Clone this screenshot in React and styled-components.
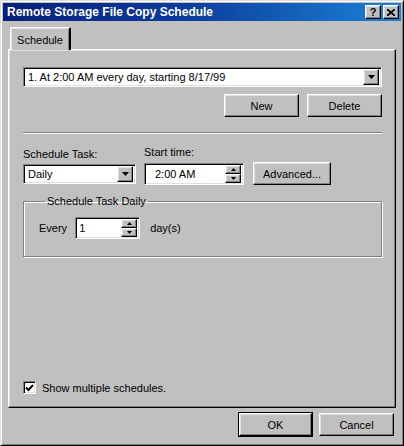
import React from "react";
import styled, { createGlobalStyle, css } from "styled-components";

const GlobalStyle = createGlobalStyle`
  html, body {
    margin: 0;
    padding: 0;
    background: #c0c0c0;
  }
  * {
    box-sizing: border-box;
  }
`;

const raised = css`
  border: 1px solid;
  border-color: #ffffff #000000 #000000 #ffffff;
  box-shadow: inset -1px -1px #808080, inset 1px 1px #dfdfdf;
  background: #c0c0c0;
`;

const sunken = css`
  border: 1px solid;
  border-color: #808080 #ffffff #ffffff #808080;
  box-shadow: inset 1px 1px #000000, inset -1px -1px #dfdfdf;
  background: #ffffff;
`;

const Window = styled.div`
  width: 404px;
  height: 446px;
  display: flex;
  flex-direction: column;
  padding: 2px;
  border: 1px solid;
  border-color: #dfdfdf #000000 #000000 #dfdfdf;
  box-shadow: inset 1px 1px #ffffff, inset -1px -1px #808080;
  background: #c0c0c0;
  font-family: "Liberation Sans", Arial, sans-serif;
  font-size: 11px;
  color: #000;
`;

const TitleBar = styled.div`
  height: 18px;
  flex: none;
  display: flex;
  align-items: center;
  padding: 0 2px 0 4px;
  background: linear-gradient(to right, #08207a 0%, #0c3c9c 45%, #1a82d6 100%);
  color: #fff;
  font-weight: bold;
  font-size: 12px;
`;

const Title = styled.span`
  flex: 1;
  white-space: nowrap;
`;

const CaptionButtons = styled.div`
  display: flex;
  gap: 2px;
`;

const CaptionButton = styled.div`
  ${raised};
  width: 16px;
  height: 14px;
  display: flex;
  align-items: center;
  justify-content: center;
  color: #000;
  font-size: 11px;
  font-weight: bold;
  line-height: 1;
`;

const Body = styled.div`
  flex: 1;
  display: flex;
  flex-direction: column;
  padding: 6px 5px 0 5px;
`;

const TabStrip = styled.div`
  display: flex;
  padding-left: 2px;
  height: 22px;
  position: relative;
  z-index: 1;
`;

const Tab = styled.div`
  width: 61px;
  height: 23px;
  display: flex;
  align-items: center;
  justify-content: center;
  border-left: 1px solid #ffffff;
  border-top: 1px solid #ffffff;
  border-right: 2px solid #000000;
  border-top-left-radius: 2px;
  border-top-right-radius: 2px;
  box-shadow: inset 1px 1px #dfdfdf, inset -1px 0 #808080;
  background: #c0c0c0;
  padding-top: 1px;
`;

const Panel = styled.div`
  height: 359px;
  flex: none;
  display: flex;
  flex-direction: column;
  padding: 17px 13px 13px 14px;
  border: 1px solid;
  border-color: #ffffff #000000 #000000 #ffffff;
  box-shadow: inset -1px -1px #808080, inset 1px 1px #dfdfdf;
`;

const Row = styled.div`
  display: flex;
  align-items: center;
  flex: none;
  gap: ${(p) => p.$gap || 0}px;
  justify-content: ${(p) => p.$justify || "flex-start"};
  margin-top: ${(p) => p.$top || 0}px;
`;

const Field = styled.div`
  ${sunken};
  height: ${(p) => p.$h || 20}px;
  width: ${(p) => (p.$w ? p.$w + "px" : "auto")};
  flex: none;
  display: flex;
  align-items: center;
  padding: 2px;
`;

const FieldText = styled.span`
  flex: 1;
  padding-left: ${(p) => p.$pad || 2}px;
  white-space: nowrap;
`;

const DropButton = styled.div`
  ${raised};
  width: 16px;
  height: 16px;
  display: flex;
  align-items: center;
  justify-content: center;
`;

const Spinner = styled.div`
  display: flex;
  flex-direction: column;
  width: 16px;
  height: 18px;
`;

const SpinHalf = styled.div`
  ${raised};
  flex: 1;
  display: flex;
  align-items: center;
  justify-content: center;
`;

const Button = styled.div`
  ${raised};
  width: ${(p) => p.$w || 75}px;
  height: 23px;
  flex: none;
  display: flex;
  align-items: center;
  justify-content: center;
  ${(p) =>
    p.$default &&
    css`
      box-shadow: inset -1px -1px #808080, inset 1px 1px #dfdfdf, 0 0 0 1px #000;
    `}
`;

const Separator = styled.div`
  height: 2px;
  flex: none;
  margin-top: 15px;
  border-top: 1px solid #808080;
  border-bottom: 1px solid #ffffff;
`;

const Column = styled.div`
  display: flex;
  flex-direction: column;
  gap: 4px;
  width: ${(p) => (p.$w ? p.$w + "px" : "auto")};
`;

const Label = styled.span`
  white-space: nowrap;
  margin-left: ${(p) => p.$left || 0}px;
`;

const Group = styled.fieldset`
  flex: none;
  margin: 10px 0 0 0;
  padding: 10px 0 0 15px;
  height: 62px;
  border: 1px solid #808080;
  box-shadow: 1px 1px #ffffff, inset 1px 1px #ffffff;
`;

const Legend = styled.legend`
  padding: 0 2px;
  margin-left: 6px;
`;

const CheckRow = styled.div`
  margin-top: auto;
  display: flex;
  align-items: center;
  gap: 6px;
`;

const CheckBox = styled.div`
  ${sunken};
  width: 13px;
  height: 13px;
  display: flex;
  align-items: center;
  justify-content: center;
`;

const Footer = styled.div`
  display: flex;
  justify-content: flex-end;
  gap: 7px;
  padding: 5px 2px 0 0;
`;

const Arrow = ({ up, small }) => {
  const w = small ? 5 : 7;
  const h = small ? 3 : 4;
  return (
    <svg width={w} height={h} viewBox={`0 0 ${w} ${h}`}>
      <polygon
        points={up ? `0,${h} ${w},${h} ${w / 2},0` : `0,0 ${w},0 ${w / 2},${h}`}
        fill="#000"
      />
    </svg>
  );
};

const Combo = ({ text, w }) => (
  <Field $w={w}>
    <FieldText>{text}</FieldText>
    <DropButton>
      <Arrow />
    </DropButton>
  </Field>
);

const SpinField = ({ text, w, pad }) => (
  <Field $w={w} $h={22}>
    <FieldText $pad={pad}>{text}</FieldText>
    <Spinner>
      <SpinHalf>
        <Arrow up small />
      </SpinHalf>
      <SpinHalf>
        <Arrow small />
      </SpinHalf>
    </Spinner>
  </Field>
);

export default function App() {
  return (
    <>
      <GlobalStyle />
      <Window>
        <TitleBar>
          <Title>Remote Storage File Copy Schedule</Title>
          <CaptionButtons>
            <CaptionButton>?</CaptionButton>
            <CaptionButton>
              <svg width="8" height="7" viewBox="0 0 8 7">
                <path d="M0 0 L8 7 M8 0 L0 7" stroke="#000" strokeWidth="1.8" />
              </svg>
            </CaptionButton>
          </CaptionButtons>
        </TitleBar>
        <Body>
          <TabStrip>
            <Tab>Schedule</Tab>
          </TabStrip>
          <Panel>
            <Combo text="1. At 2:00 AM every day, starting 8/17/99" />
            <Row $top={7} $gap={8} $justify="flex-end">
              <Button>New</Button>
              <Button>Delete</Button>
            </Row>
            <Separator />
            <Row $top={12} $gap={8}>
              <Column $w={113}>
                <Label>Schedule Task:</Label>
                <Combo text="Daily" w={113} />
              </Column>
              <Column>
                <Label>Start time:</Label>
                <Row $gap={9}>
                  <SpinField text="2:00 AM" w={100} pad={8} />
                  <Button $w={78}>Advanced...</Button>
                </Row>
              </Column>
            </Row>
            <Group>
              <Legend>Schedule Task Daily</Legend>
              <Row $gap={8}>
                <Label>Every</Label>
                <SpinField text="1" w={65} pad={1} />
                <Label $left={2}>day(s)</Label>
              </Row>
            </Group>
            <CheckRow>
              <CheckBox>
                <svg width="9" height="8" viewBox="0 0 9 8">
                  <path d="M1 3.5 L3.5 6 L8 1" stroke="#000" strokeWidth="2" fill="none" />
                </svg>
              </CheckBox>
              <Label>Show multiple schedules.</Label>
            </CheckRow>
          </Panel>
          <Footer>
            <Button $default $w={73}>OK</Button>
            <Button $w={75}>Cancel</Button>
          </Footer>
        </Body>
      </Window>
    </>
  );
}
